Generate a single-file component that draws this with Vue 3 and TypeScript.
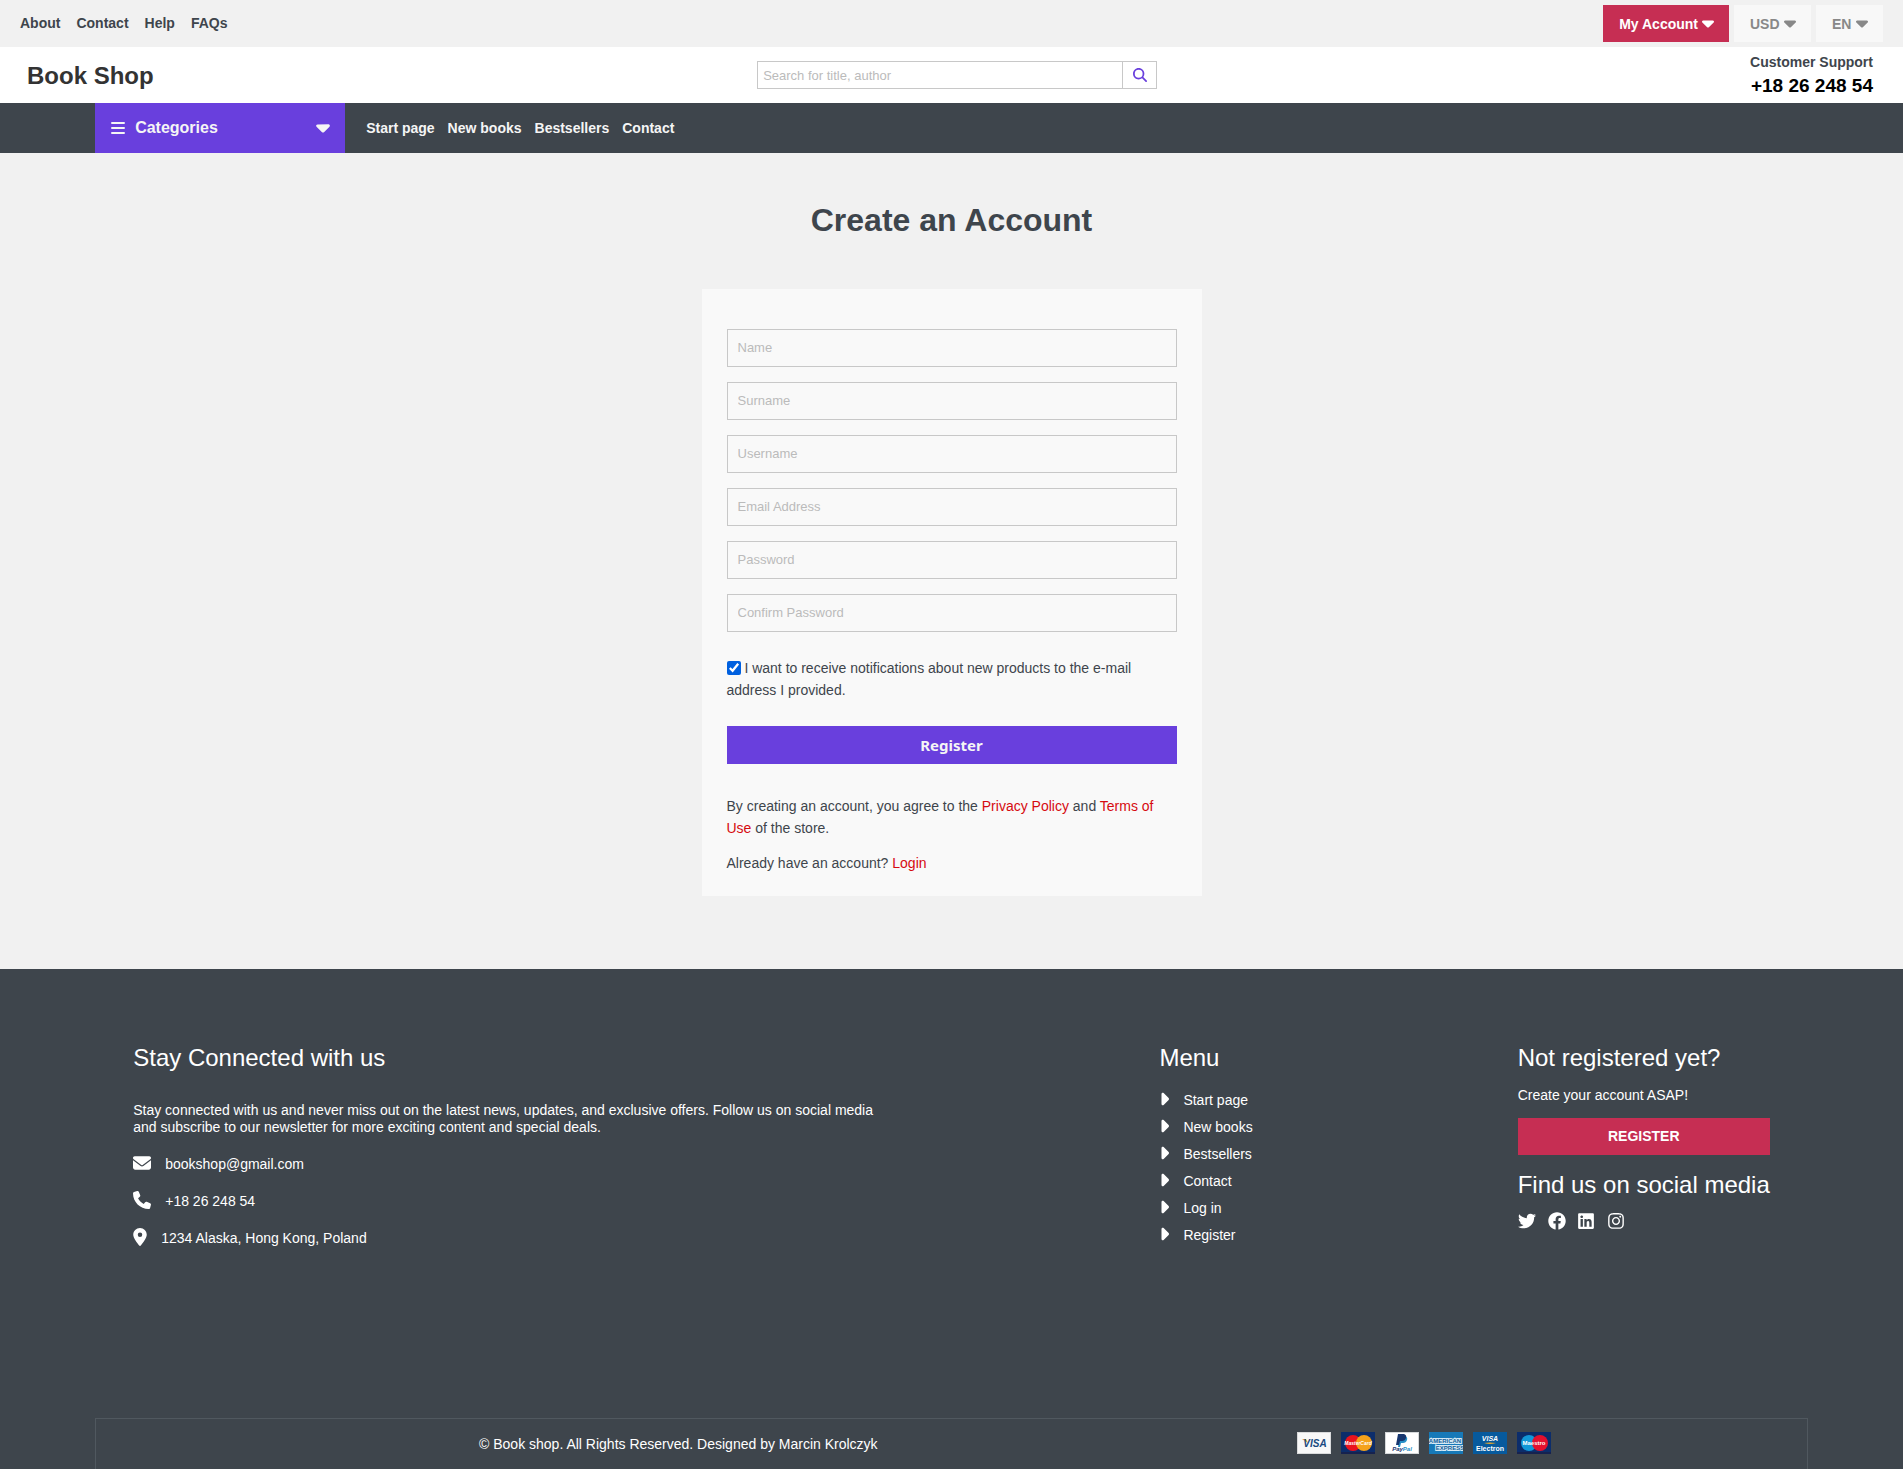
<script setup lang="ts">
import { ref } from 'vue'

interface Field {
  id: string
  label: string
  type: string
}

interface Icon {
  name: string
  box: string
  width: number
  path: string
}

const topLinks = ['About', 'Contact', 'Help', 'FAQs']
const navLinks = ['Start page', 'New books', 'Bestsellers', 'Contact']
const footerLinks = ['Start page', 'New books', 'Bestsellers', 'Contact', 'Log in', 'Register']

const fields: Field[] = [
  { id: 'name', label: 'Name', type: 'text' },
  { id: 'surname', label: 'Surname', type: 'text' },
  { id: 'username', label: 'Username', type: 'text' },
  { id: 'email', label: 'Email Address', type: 'email' },
  { id: 'password', label: 'Password', type: 'password' },
  { id: 'confirm', label: 'Confirm Password', type: 'password' },
]

const contacts: Icon[] = [
  {
    name: 'bookshop@gmail.com',
    box: '0 0 512 512',
    width: 18,
    path: 'M48 64C21.5 64 0 85.5 0 112c0 15.1 7.1 29.3 19.2 38.4L236.8 313.6c11.4 8.5 27 8.5 38.4 0L492.8 150.4c12.1-9.1 19.2-23.3 19.2-38.4c0-26.5-21.5-48-48-48H48zM0 176V384c0 35.3 28.7 64 64 64H448c35.3 0 64-28.7 64-64V176L294.4 339.2c-22.8 17.1-54 17.1-76.8 0L0 176z',
  },
  {
    name: '+18 26 248 54',
    box: '0 0 512 512',
    width: 18,
    path: 'M164.9 24.6c-7.7-18.6-28-28.5-47.4-23.2l-88 24C12.1 30.2 0 46 0 64C0 311.4 200.6 512 448 512c18 0 33.8-12.1 38.6-29.5l24-88c5.3-19.4-4.6-39.7-23.2-47.4l-96-40c-16.3-6.8-35.2-2.1-46.3 11.6L304.7 368C234.3 334.7 177.3 277.7 144 207.3L193.3 167c13.7-11.2 18.4-30 11.6-46.3l-40-96z',
  },
  {
    name: '1234 Alaska, Hong Kong, Poland',
    box: '0 0 384 512',
    width: 14,
    path: 'M215.7 499.2C267 435 384 279.4 384 192C384 86 298 0 192 0S0 86 0 192c0 87.4 117 243 168.3 307.2c12.3 15.3 35.1 15.3 47.4 0zM192 128a64 64 0 1 1 0 128 64 64 0 1 1 0-128z',
  },
]

const socials: Icon[] = [
  {
    name: 'Twitter',
    box: '0 0 512 512',
    width: 18,
    path: 'M459.37 151.716c.325 4.548.325 9.097.325 13.645 0 138.72-105.583 298.558-298.558 298.558-59.452 0-114.68-17.219-161.137-47.106 8.447.974 16.568 1.299 25.34 1.299 49.055 0 94.213-16.568 130.274-44.832-46.132-.975-84.792-31.188-98.112-72.772 6.498.974 12.995 1.624 19.818 1.624 9.421 0 18.843-1.3 27.614-3.573-48.081-9.747-84.143-51.98-84.143-102.985v-1.299c13.969 7.797 30.214 12.67 47.431 13.319-28.264-18.843-46.781-51.005-46.781-87.391 0-19.492 5.197-37.36 14.294-52.954 51.655 63.675 129.3 105.258 216.365 109.807-1.624-7.797-2.599-15.918-2.599-24.04 0-57.828 46.782-104.934 104.934-104.934 30.213 0 57.502 12.67 76.67 33.137 23.715-4.548 46.456-13.32 66.599-25.34-7.798 24.366-24.366 44.833-46.132 57.827 21.117-2.273 41.584-8.122 60.426-16.243-14.292 20.791-32.161 39.308-52.628 54.253z',
  },
  {
    name: 'Facebook',
    box: '0 0 512 512',
    width: 18,
    path: 'M504 256C504 119 393 8 256 8S8 119 8 256c0 123.78 90.69 226.38 209.25 245V327.69h-63V256h63v-54.64c0-62.15 37-96.48 93.67-96.48 27.14 0 55.52 4.84 55.52 4.84v61h-31.28c-30.8 0-40.41 19.12-40.41 38.73V256h68.78l-11 71.69h-57.78V501C413.31 482.38 504 379.78 504 256z',
  },
  {
    name: 'LinkedIn',
    box: '0 0 448 512',
    width: 16,
    path: 'M416 32H31.9C14.3 32 0 46.5 0 64.3v383.4C0 465.5 14.3 480 31.9 480H416c17.6 0 32-14.5 32-32.3V64.3c0-17.8-14.4-32.3-32-32.3zM135.4 416H69V202.2h66.5V416zm-33.2-243c-21.3 0-38.5-17.3-38.5-38.5S80.9 96 102.2 96c21.2 0 38.5 17.3 38.5 38.5 0 21.3-17.2 38.5-38.5 38.5zm282.1 243h-66.4V312c0-24.8-.5-56.7-34.5-56.7-34.6 0-39.9 27-39.9 54.9V416h-66.4V202.2h63.7v29.2h.9c8.9-16.8 30.6-34.5 62.9-34.5 67.2 0 79.7 44.3 79.7 101.9V416z',
  },
  {
    name: 'Instagram',
    box: '0 0 448 512',
    width: 16,
    path: 'M224.1 141c-63.6 0-114.9 51.3-114.9 114.9s51.3 114.9 114.9 114.9S339 319.5 339 255.9 287.7 141 224.1 141zm0 189.6c-41.1 0-74.7-33.5-74.7-74.7s33.5-74.7 74.7-74.7 74.7 33.5 74.7 74.7-33.6 74.7-74.7 74.7zm146.4-194.3c0 14.9-12 26.8-26.8 26.8-14.9 0-26.8-12-26.8-26.8s12-26.8 26.8-26.8 26.8 12 26.8 26.8zm76.1 27.2c-1.7-35.9-9.9-67.7-36.2-93.9-26.2-26.2-58-34.4-93.9-36.2-37-2.1-147.9-2.1-184.9 0-35.8 1.7-67.6 9.9-93.9 36.1s-34.4 58-36.2 93.9c-2.1 37-2.1 147.9 0 184.9 1.7 35.9 9.9 67.7 36.2 93.9s58 34.4 93.9 36.2c37 2.1 147.9 2.1 184.9 0 35.9-1.7 67.7-9.9 93.9-36.2 26.2-26.2 34.4-58 36.2-93.9 2.1-37 2.1-147.8 0-184.8zM398.8 388c-7.8 19.6-22.9 34.7-42.6 42.6-29.5 11.7-99.5 9-132.1 9s-102.7 2.6-132.1-9c-19.6-7.8-34.7-22.9-42.6-42.6-11.7-29.5-9-99.5-9-132.1s-2.6-102.7 9-132.1c7.8-19.6 22.9-34.7 42.6-42.6 29.5-11.7 99.5-9 132.1-9s102.7-2.6 132.1 9c19.6 7.8 34.7 22.9 42.6 42.6 11.7 29.5 9 99.5 9 132.1s2.7 102.7-9 132.1z',
  },
]

const caretDown =
  'M137.4 374.6c12.5 12.5 32.8 12.5 45.3 0l128-128c9.2-9.2 11.9-22.9 6.9-34.9s-16.6-19.8-29.6-19.8L32 192c-12.9 0-24.6 7.8-29.6 19.8s-2.2 25.7 6.9 34.9l128 128z'
const caretRight =
  'M246.6 278.6c12.5-12.5 12.5-32.8 0-45.3l-128-128c-9.2-9.2-22.9-11.9-34.9-6.9s-19.8 16.6-19.8 29.6l0 256c0 12.9 7.8 24.6 19.8 29.6s25.7 2.2 34.9-6.9l128-128z'

const search = ref('')
const currency = ref('USD')
const language = ref('EN')
const values = ref<Record<string, string>>({})
const notify = ref(true)
</script>

<template>
  <div class="page">
    <div class="topbar">
      <nav class="top-links">
        <a v-for="l in topLinks" :key="l" href="#">{{ l }}</a>
      </nav>
      <div class="top-actions">
        <button type="button" class="pill account">
          My Account
          <svg class="caret" viewBox="0 160 320 256"><path :d="caretDown" /></svg>
        </button>
        <label class="pill">
          <select v-model="currency" aria-label="Currency"><option>USD</option></select>
          <svg class="caret" viewBox="0 160 320 256"><path :d="caretDown" /></svg>
        </label>
        <label class="pill">
          <select v-model="language" aria-label="Language"><option>EN</option></select>
          <svg class="caret" viewBox="0 160 320 256"><path :d="caretDown" /></svg>
        </label>
      </div>
    </div>

    <header class="header">
      <a class="logo" href="#">Book Shop</a>
      <form class="search" @submit.prevent>
        <input v-model="search" type="text" placeholder="Search for title, author" aria-label="Search" />
        <button type="submit" aria-label="Search">
          <svg viewBox="0 0 512 512">
            <path d="M416 208c0 45.9-14.9 88.3-40 122.7L502.6 457.4c12.5 12.5 12.5 32.8 0 45.3s-32.8 12.5-45.3 0L330.7 376c-34.4 25.2-76.8 40-122.7 40C93.1 416 0 322.9 0 208S93.1 0 208 0S416 93.1 416 208zM208 352a144 144 0 1 0 0-288 144 144 0 1 0 0 288z" />
          </svg>
        </button>
      </form>
      <div class="support">
        <span class="support-label">Customer Support</span>
        <span class="support-phone">+18 26 248 54</span>
      </div>
    </header>

    <div class="navbar">
      <button type="button" class="categories">
        <svg class="bars" viewBox="0 0 14 16">
          <path d="M1 2h12a1 1 0 0 1 0 2H1a1 1 0 0 1 0-2zM1 7h12a1 1 0 0 1 0 2H1a1 1 0 0 1 0-2zM1 12h12a1 1 0 0 1 0 2H1a1 1 0 0 1 0-2z" />
        </svg>
        <span>Categories</span>
        <svg class="caret large" viewBox="0 160 320 256"><path :d="caretDown" /></svg>
      </button>
      <nav class="nav-links">
        <a v-for="l in navLinks" :key="l" href="#">{{ l }}</a>
      </nav>
    </div>

    <main class="main">
      <h1>Create an Account</h1>
      <form class="card" @submit.prevent>
        <input
          v-for="f in fields"
          :key="f.id"
          v-model="values[f.id]"
          class="field"
          :type="f.type"
          :placeholder="f.label"
          :aria-label="f.label"
        />
        <label class="notify">
          <input v-model="notify" type="checkbox" />
          I want to receive notifications about new products to the e-mail address I provided.
        </label>
        <button type="submit" class="submit">Register</button>
        <p class="terms">
          By creating an account, you agree to the <a href="#">Privacy Policy</a> and
          <a href="#">Terms of Use</a> of the store.
        </p>
        <p class="login">Already have an account? <a href="#">Login</a></p>
      </form>
    </main>

    <footer class="footer">
      <div class="columns">
        <section class="about">
          <h2>Stay Connected with us</h2>
          <p>
            Stay connected with us and never miss out on the latest news, updates, and exclusive offers.
            Follow us on social media and subscribe to our newsletter for more exciting content and
            special deals.
          </p>
          <ul>
            <li v-for="c in contacts" :key="c.name">
              <svg :viewBox="c.box" :width="c.width" height="18"><path :d="c.path" /></svg>
              <span>{{ c.name }}</span>
            </li>
          </ul>
        </section>
        <section class="menu">
          <h2>Menu</h2>
          <ul>
            <li v-for="l in footerLinks" :key="l">
              <svg viewBox="0 0 256 512" width="10" height="20"><path :d="caretRight" /></svg>
              <a href="#">{{ l }}</a>
            </li>
          </ul>
        </section>
        <section class="join">
          <h2>Not registered yet?</h2>
          <p>Create your account ASAP!</p>
          <a class="join-button" href="#">REGISTER</a>
          <h2>Find us on social media</h2>
          <div class="socials">
            <a v-for="s in socials" :key="s.name" href="#" :aria-label="s.name">
              <svg :viewBox="s.box" :width="s.width" height="18"><path :d="s.path" /></svg>
            </a>
          </div>
        </section>
      </div>

      <div class="bottom">
        <p>© Book shop. All Rights Reserved. Designed by Marcin Krolczyk</p>
        <div class="payments">
          <svg viewBox="0 0 34 22" role="img" aria-label="Visa">
            <rect width="34" height="22" fill="#d9dadb" />
            <rect x="1" y="1" width="32" height="20" fill="#f8f8f8" />
            <path d="M5 7h4l2 4z" fill="#e9a72c" />
            <text x="18" y="15" font-size="10" font-style="italic" fill="#1a4a80">VISA</text>
          </svg>
          <svg viewBox="0 0 34 22" role="img" aria-label="MasterCard">
            <rect width="34" height="22" fill="#0c2d6b" />
            <rect y="20" width="34" height="2" fill="#16224f" />
            <circle cx="12" cy="11" r="8" fill="#e9131d" />
            <circle cx="23" cy="11" r="8" fill="#f5a21b" />
            <text x="17" y="13" font-size="5" font-style="italic" fill="#fff">MasterCard</text>
          </svg>
          <svg viewBox="0 0 34 22" role="img" aria-label="PayPal">
            <rect width="34" height="22" fill="#d5d8da" />
            <rect x="1" y="1" width="32" height="20" fill="#fff" />
            <path d="M15 4h5q3 1 2 4-1 3-4 3h-2l-1 4h-2z" fill="#2790c8" />
            <path d="M13 2h6q3 1 2 4-1 3-4 3h-2l-1 4h-3z" fill="#17366f" />
            <text x="17" y="19" font-size="6" font-style="italic" fill="#17366f">Pay<tspan fill="#2790c8">Pal</tspan></text>
          </svg>
          <svg viewBox="0 0 34 22" role="img" aria-label="American Express">
            <rect width="34" height="22" fill="#1779b8" />
            <g fill="#135e98" stroke="#d6e9f5" stroke-width="2" paint-order="stroke">
              <text x="16" y="11" font-size="6">AMERICAN</text>
              <text x="21" y="18" font-size="6">EXPRESS</text>
            </g>
          </svg>
          <svg viewBox="0 0 34 22" role="img" aria-label="Visa Electron">
            <rect width="34" height="22" fill="#075a9d" />
            <text x="17" y="9" font-size="7" font-style="italic" fill="#fff">VISA</text>
            <path d="M11 11q6-1 12 0-6 2-12 0z" fill="#e9a72c" />
            <text x="17" y="19" font-size="7" fill="#fff">Electron</text>
          </svg>
          <svg viewBox="0 0 34 22" role="img" aria-label="Maestro">
            <rect width="34" height="22" fill="#0c2d6b" />
            <rect y="20" width="34" height="2" fill="#16224f" />
            <circle cx="12" cy="11" r="8" fill="#1298d8" />
            <circle cx="23" cy="11" r="8" fill="#e4102e" />
            <text x="17" y="13" font-size="6" fill="#fff">Maestro</text>
          </svg>
        </div>
      </div>
    </footer>
  </div>
</template>

<style>
body {
  background: #f1f1f1;
}
</style>

<style scoped>
.page,
.page * {
  box-sizing: border-box;
}
.page {
  font-family: 'Liberation Sans', Arial, sans-serif;
  font-size: 14px;
  line-height: 17px;
  color: #3e454c;
}
.page a {
  color: inherit;
  text-decoration: none;
}
.page button,
.page input,
.page select {
  font-family: inherit;
  border: 0;
  border-radius: 0;
  outline: 0;
}
.page h1,
.page h2,
.page p,
.page ul {
  margin: 0;
  padding: 0;
  list-style: none;
}
svg {
  display: block;
  fill: currentColor;
  flex: none;
}

.topbar {
  display: flex;
  justify-content: space-between;
  align-items: center;
  padding: 5px 20px;
}
.top-links {
  display: flex;
  gap: 16px;
  font-weight: bold;
}
.top-actions {
  display: flex;
  gap: 5px;
}
.pill {
  display: flex;
  align-items: center;
  gap: 4px;
  height: 37px;
  padding: 0 15px 0 16px;
  background: #f8f8f8;
  color: #888;
  font-size: 14px;
  font-weight: bold;
}
.pill.account {
  background: #c62e53;
  color: #fff;
}
.pill select {
  appearance: none;
  padding: 0;
  background: none;
  color: inherit;
  font-size: 14px;
  font-weight: bold;
}
.caret {
  width: 12px;
  height: 10px;
}
.caret.large {
  width: 14px;
  height: 11px;
  margin-left: auto;
}

.header {
  display: grid;
  grid-template-columns: 51fr 400px 50fr;
  align-items: center;
  height: 56px;
  padding: 0 30px 0 27px;
  background: #fff;
}
.logo {
  padding-top: 2px;
  font-size: 24px;
  line-height: 28px;
  font-weight: bold;
}
.page .logo {
  color: #333;
}
.search {
  display: flex;
  height: 28px;
  border: 1px solid #c8c8c8;
}
.search input {
  flex: 1;
  padding: 0 5px;
  background: none;
  font-size: 13px;
}
.search button {
  display: flex;
  align-items: center;
  justify-content: center;
  width: 34px;
  padding: 0;
  background: none;
  color: #693fdd;
}
.page .search button {
  border-left: 1px solid #c8c8c8;
}
.search svg {
  width: 14px;
  height: 14px;
}
.page input::placeholder {
  color: #bbb;
  opacity: 1;
}
.support {
  display: flex;
  flex-direction: column;
  align-items: flex-end;
  padding-top: 4px;
  font-weight: bold;
}
.support-phone {
  font-size: 19px;
  line-height: 30px;
  color: #000;
}

.navbar {
  display: flex;
  height: 50px;
  padding: 0 5%;
  background: #3e454c;
  color: #f5f5f5;
  font-weight: bold;
}
.categories {
  display: flex;
  align-items: center;
  gap: 10px;
  width: 250px;
  padding: 0 15px 0 16px;
  background: #693fdd;
  color: #f5f5f5;
  font-size: 16px;
  font-weight: bold;
}
.bars {
  width: 14px;
  height: 16px;
}
.nav-links {
  display: flex;
  align-items: center;
  gap: 13px;
  padding-left: 21px;
}

.main {
  display: flex;
  flex-direction: column;
  align-items: center;
  padding: 48px 0 73px;
}
h1 {
  font-size: 32px;
  line-height: 38px;
}
.card {
  display: flex;
  flex-direction: column;
  width: 500px;
  margin-top: 50px;
  padding: 40px 25px 22px;
  background: #f9f9f9;
}
.page .field {
  height: 38px;
  margin-bottom: 15px;
  padding: 0 10px 2px;
  background: none;
  border: 1px solid #c8c8c8;
  font-size: 13px;
}
.notify {
  margin: 10px 0 25px;
  line-height: 22px;
}
.notify input {
  width: 14px;
  height: 14px;
  margin: 0;
  vertical-align: -2px;
  accent-color: #0060df;
}
.page .submit {
  height: 38px;
  background: #693fdd;
  color: #f5f5f5;
  font-family: 'Noto Sans', sans-serif;
  font-size: 15px;
  font-weight: bold;
}
.terms {
  line-height: 22px;
}
.page .terms {
  margin-top: 31px;
}
.page .login {
  margin-top: 13px;
  line-height: 22px;
}
.page .terms a,
.page .login a {
  color: #d60a10;
}

.footer {
  background: #3e454c;
  color: #fff;
}
.columns {
  display: flex;
  justify-content: space-between;
  min-height: 449px;
  padding: 75px 7% 0;
}
h2 {
  font-size: 24px;
  line-height: 28px;
  font-weight: normal;
}
.about {
  width: 40vw;
}
.page .about p {
  margin-top: 30px;
}
.page .about ul {
  margin-top: 10px;
}
.about li {
  display: flex;
  align-items: center;
  gap: 14px;
  height: 37px;
}
.about li svg,
.menu li svg {
  margin-bottom: 3px;
}
.page .menu ul {
  margin-top: 15px;
}
.menu li {
  display: flex;
  align-items: center;
  gap: 14px;
  height: 27px;
}
.page .join p {
  margin: 15px 0 14px;
}
.join-button {
  display: block;
  margin-bottom: 16px;
  background: #c62e53;
  line-height: 37px;
  font-weight: bold;
  text-align: center;
}
.socials {
  display: flex;
  gap: 12px;
  margin-top: 13px;
}
.socials a {
  min-width: 18px;
}
.bottom {
  display: grid;
  grid-template-columns: 148fr auto 162fr auto 99fr;
  align-items: center;
  height: 51px;
  margin: 0 5%;
  border: 1px solid #50585f;
  border-bottom: 0;
}
.bottom p {
  grid-column: 2;
}
.payments {
  grid-column: 4;
  display: flex;
  gap: 10px;
  padding-bottom: 3px;
}
.payments svg {
  width: 34px;
  height: 22px;
}
.payments text {
  font-weight: bold;
  text-anchor: middle;
}
</style>
